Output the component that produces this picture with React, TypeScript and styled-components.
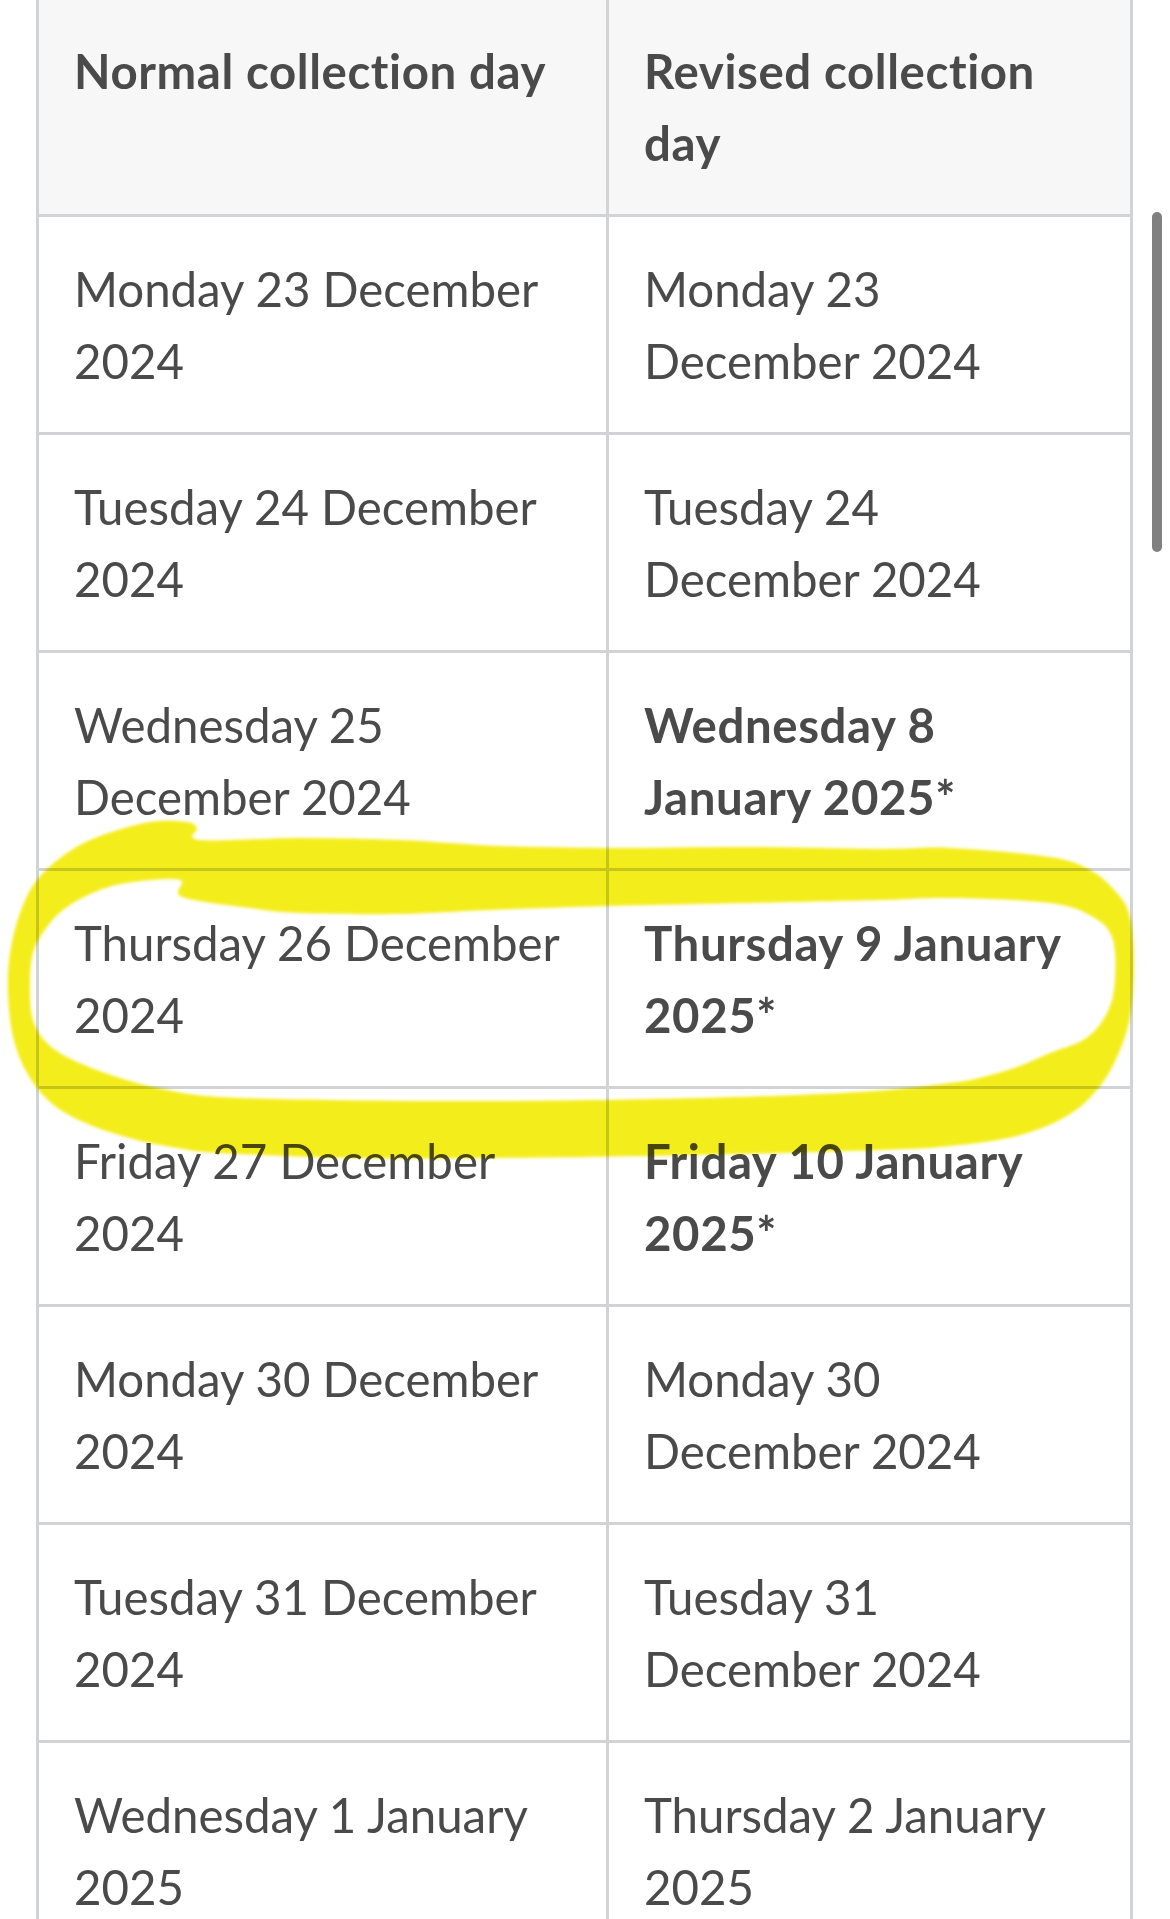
import React from "react";
import styled, { createGlobalStyle } from "styled-components";

const GlobalStyle = createGlobalStyle`
  *, *::before, *::after { box-sizing: border-box; }
  html, body { margin: 0; padding: 0; background: #ffffff; overflow: hidden; }
  body { font-family: Lato, "Open Sans", "Liberation Sans", sans-serif; }
`;

const Page = styled.div`
  position: relative;
  width: 1170px;
  height: 1919px;
  overflow: hidden;
  background: #ffffff;
`;

const Table = styled.div`
  display: grid;
  grid-template-columns: 570px 524px;
  width: 1097px;
  margin: -4px 0 0 36px;
  border-left: 3px solid #d0d4d6;
  border-top: 3px solid #d0d4d6;
`;

const Cell = styled.div<{ $head?: boolean; $bold?: boolean }>`
  padding: 36px 36px 35px 35px;
  border-right: 3px solid #d0d4d6;
  border-bottom: 3px solid #d0d4d6;
  background: ${(p) => (p.$head ? "#f7f7f7" : "#ffffff")};
  color: #4a4a4a;
  font-family: Lato, "Open Sans", "Liberation Sans", sans-serif;
  font-size: 47.4px;
  line-height: 72px;
  font-weight: ${(p) => (p.$head || p.$bold ? 700 : 400)};
  letter-spacing: ${(p) => (p.$head || p.$bold ? "0.6px" : "0")};
`;

const ScrollThumb = styled.div`
  position: absolute;
  left: 1152px;
  top: 212px;
  width: 10px;
  height: 340px;
  border-radius: 5px;
  background: #808080;
`;

const Highlight = styled.svg`
  position: absolute;
  left: 0;
  top: 0;
  width: 1170px;
  height: 1919px;
  pointer-events: none;
  mix-blend-mode: multiply;
`;

type Pt = [number, number];

const smooth = (pts: Pt[]): string => {
  const n = pts.length;
  let d = `M${pts[0][0]},${pts[0][1]}`;
  for (let i = 0; i < n; i++) {
    const p0 = pts[(i - 1 + n) % n];
    const p1 = pts[i];
    const p2 = pts[(i + 1) % n];
    const p3 = pts[(i + 2) % n];
    const c1x = p1[0] + (p2[0] - p0[0]) / 6;
    const c1y = p1[1] + (p2[1] - p0[1]) / 6;
    const c2x = p2[0] - (p3[0] - p1[0]) / 6;
    const c2y = p2[1] - (p3[1] - p1[1]) / 6;
    d += ` C${c1x.toFixed(1)},${c1y.toFixed(1)} ${c2x.toFixed(1)},${c2y.toFixed(1)} ${p2[0]},${p2[1]}`;
  }
  return d + " Z";
};

const outer: Pt[] = [
  [150, 822], [187, 822], [197, 828], [200, 840],
  [300, 838], [400, 840], [500, 846], [608, 848], [750, 847], [880, 849],
  [950, 848], [1050, 857], [1090, 870], [1117, 893], [1130, 917],
  [1134, 963], [1130, 1017], [1117, 1057], [1097, 1090], [1067, 1116],
  [1017, 1136], [950, 1146], [880, 1150], [700, 1155], [500, 1158],
  [350, 1158], [220, 1153], [183, 1149], [133, 1139], [83, 1122], [50, 1102],
  [27, 1073], [13, 1037], [8, 993], [10, 953], [20, 913], [37, 880], [67, 853],
  [100, 836],
];

const inner: Pt[] = [
  [180, 880], [182, 897], [250, 908], [300, 913], [400, 914], [490, 910],
  [608, 906], [750, 903], [880, 900], [950, 898], [1050, 903], [1093, 917],
  [1113, 940], [1114, 990], [1103, 1020], [1083, 1040], [1050, 1053],
  [1017, 1067], [983, 1077], [950, 1083], [860, 1092], [700, 1098], [500, 1101],
  [330, 1100], [220, 1097], [167, 1090], [117, 1077], [73, 1060], [47, 1043],
  [33, 1020], [30, 987], [33, 953], [47, 927], [67, 907], [100, 890],
  [133, 882],
];

const markerPath = `${smooth(outer)} ${smooth(inner)}`;

type Row = { normal: string; revised: string; changed: boolean };

const rows: Row[] = [
  { normal: "Monday 23 December 2024", revised: "Monday 23 December 2024", changed: false },
  { normal: "Tuesday 24 December 2024", revised: "Tuesday 24 December 2024", changed: false },
  { normal: "Wednesday 25 December 2024", revised: "Wednesday 8 January 2025*", changed: true },
  { normal: "Thursday 26 December 2024", revised: "Thursday 9 January 2025*", changed: true },
  { normal: "Friday 27 December 2024", revised: "Friday 10 January 2025*", changed: true },
  { normal: "Monday 30 December 2024", revised: "Monday 30 December 2024", changed: false },
  { normal: "Tuesday 31 December 2024", revised: "Tuesday 31 December 2024", changed: false },
  { normal: "Wednesday 1 January 2025", revised: "Thursday 2 January 2025", changed: false },
];

export default function App() {
  return (
    <>
      <GlobalStyle />
      <Page>
        <Table role="table">
          <Cell $head role="columnheader">Normal collection day</Cell>
          <Cell $head role="columnheader">Revised collection day</Cell>
          {rows.map((r) => (
            <React.Fragment key={r.normal}>
              <Cell role="cell">{r.normal}</Cell>
              <Cell role="cell" $bold={r.changed}>{r.revised}</Cell>
            </React.Fragment>
          ))}
        </Table>
        <ScrollThumb />
        <Highlight viewBox="0 0 1170 1919">
          <defs>
            <filter id="soft" x="-5%" y="-5%" width="110%" height="110%">
              <feGaussianBlur stdDeviation="1.4" />
            </filter>
          </defs>
          <path d={markerPath} fill="#f4ed1c" fillRule="evenodd" filter="url(#soft)" />
        </Highlight>
      </Page>
    </>
  );
}
